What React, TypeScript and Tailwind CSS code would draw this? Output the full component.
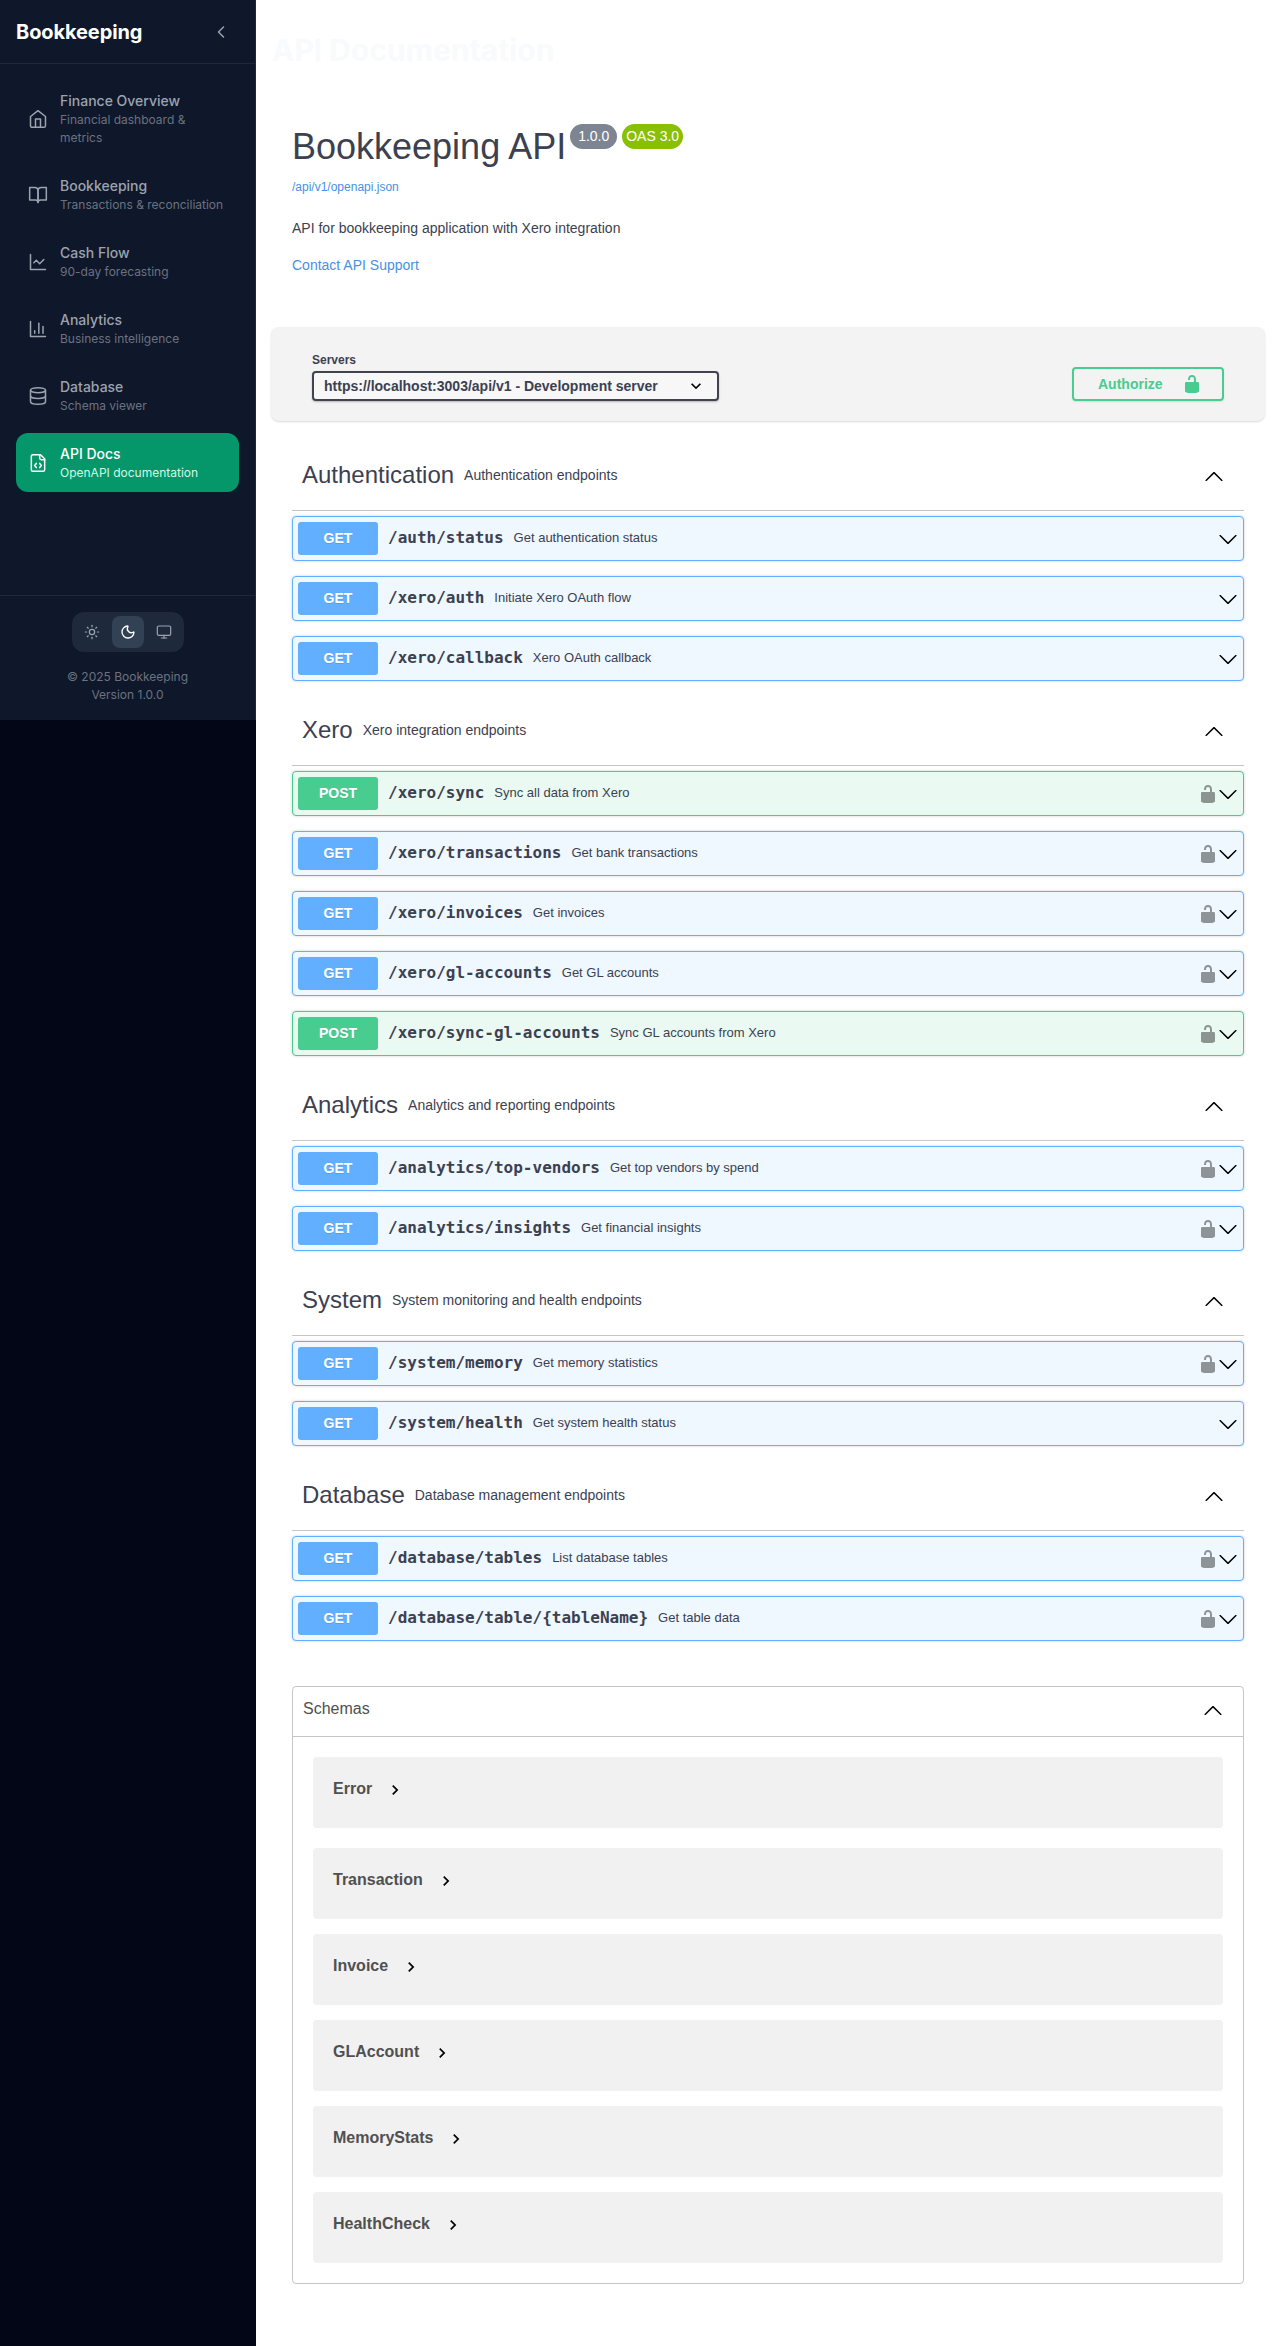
import React from 'react';
import { ChevronLeft, Database, Sun, Moon, Monitor } from 'lucide-react';

type Op = [method: 'GET' | 'POST', path: string, summary: string, locked: boolean];

const sections: { name: string; desc: string; ops: Op[] }[] = [
  {
    name: 'Authentication',
    desc: 'Authentication endpoints',
    ops: [
      ['GET', '/auth/status', 'Get authentication status', false],
      ['GET', '/xero/auth', 'Initiate Xero OAuth flow', false],
      ['GET', '/xero/callback', 'Xero OAuth callback', false],
    ],
  },
  {
    name: 'Xero',
    desc: 'Xero integration endpoints',
    ops: [
      ['POST', '/xero/sync', 'Sync all data from Xero', true],
      ['GET', '/xero/transactions', 'Get bank transactions', true],
      ['GET', '/xero/invoices', 'Get invoices', true],
      ['GET', '/xero/gl-accounts', 'Get GL accounts', true],
      ['POST', '/xero/sync-gl-accounts', 'Sync GL accounts from Xero', true],
    ],
  },
  {
    name: 'Analytics',
    desc: 'Analytics and reporting endpoints',
    ops: [
      ['GET', '/analytics/top-vendors', 'Get top vendors by spend', true],
      ['GET', '/analytics/insights', 'Get financial insights', true],
    ],
  },
  {
    name: 'System',
    desc: 'System monitoring and health endpoints',
    ops: [
      ['GET', '/system/memory', 'Get memory statistics', true],
      ['GET', '/system/health', 'Get system health status', false],
    ],
  },
  {
    name: 'Database',
    desc: 'Database management endpoints',
    ops: [
      ['GET', '/database/tables', 'List database tables', true],
      ['GET', '/database/table/{tableName}', 'Get table data', true],
    ],
  },
];

const schemas = ['Error', 'Transaction', 'Invoice', 'GLAccount', 'MemoryStats', 'HealthCheck'];

function Line({ children }: { children: React.ReactNode }) {
  return (
    <svg className="size-5" viewBox="0 0 24 24" fill="none" stroke="currentColor" strokeWidth="1.8" strokeLinecap="round" strokeLinejoin="round">
      {children}
    </svg>
  );
}

const navItems = [
  {
    label: 'Finance Overview',
    desc: 'Financial dashboard & metrics',
    icon: (
      <Line>
        <path d="m3 9 9-7 9 7v11a2 2 0 0 1-2 2H5a2 2 0 0 1-2-2z" />
        <path d="M9 22V12h6v10" />
      </Line>
    ),
  },
  { label: 'Bookkeeping', desc: 'Transactions & reconciliation', icon: <Line><path d="M2 3h6a4 4 0 0 1 4 4v14a3 3 0 0 0-3-3H2z" /><path d="M22 3h-6a4 4 0 0 0-4 4v14a3 3 0 0 1 3-3h7z" /></Line> },
  { label: 'Cash Flow', desc: '90-day forecasting', icon: <Line><path d="M3 3v18h18" /><path d="m19 9-5 5-4-4-3 3" /></Line> },
  { label: 'Analytics', desc: 'Business intelligence', icon: <Line><path d="M3 3v18h18" /><path d="M18 17V9" /><path d="M13 17V5" /><path d="M8 17v-3" /></Line> },
  { label: 'Database', desc: 'Schema viewer', icon: <Database className="size-5" strokeWidth={1.8} /> },
  {
    label: 'API Docs',
    desc: 'OpenAPI documentation',
    active: true,
    icon: (
      <Line>
        <path d="M15 2H6a2 2 0 0 0-2 2v16a2 2 0 0 0 2 2h12a2 2 0 0 0 2-2V7z" />
        <path d="M14 2v4a2 2 0 0 0 2 2h4" />
        <path d="M10 12.5 8 15l2 2.5" />
        <path d="m14 12.5 2 2.5-2 2.5" />
      </Line>
    ),
  },
];

function Arrow({ up = false }: { up?: boolean }) {
  return (
    <svg className="size-5 shrink-0" viewBox="0 0 20 20" fill="#000">
      {up ? (
        <path d="M 17.418 14.908 C 17.69 15.176 18.127 15.176 18.397 14.908 C 18.667 14.64 18.668 14.207 18.397 13.939 L 10.489 6.109 C 10.219 5.841 9.782 5.841 9.51 6.109 L 1.602 13.939 C 1.332 14.207 1.332 14.64 1.602 14.908 C 1.873 15.176 2.311 15.176 2.581 14.908 L 10 7.767 Z" />
      ) : (
        <path d="M17.418 6.109c.272-.268.709-.268.979 0s.271.701 0 .969l-7.908 7.830c-.27.268-.707.268-.979 0l-7.908-7.830c-.27-.268-.27-.701 0-.969.271-.268.709-.268.979 0L10 13.250z" />
      )}
    </svg>
  );
}

function Unlock({ className }: { className: string }) {
  return (
    <svg className={className} viewBox="0 0 20 20" fill="currentColor">
      <path d="M15.800 8H14V5.600C14 2.703 12.665 1 10 1 7.334 1 6 2.703 6 5.600V6h2v-.801C8 3.754 8.797 3 10 3c1.203 0 2 .754 2 2.199V8H4c-.553 0-1 .646-1 1.199V17c0 .549.428 1.139.951 1.307l1.197.387C5.672 18.861 6.550 19 7.100 19h5.800c.549 0 1.428-.139 1.951-.307l1.196-.387c.524-.167.953-.757.953-1.306V9.199C17 8.646 16.352 8 15.800 8z" />
    </svg>
  );
}

function Chevron({ className }: { className: string }) {
  return (
    <svg className={className} viewBox="0 0 24 24" fill="#000">
      <path d="M10 6L8.590 7.410 13.170 12l-4.580 4.590L10 18l6-6z" />
    </svg>
  );
}

function Operation({ op: [method, path, summary, locked] }: { op: Op }) {
  const post = method === 'POST';
  return (
    <div
      className={`flex h-[45px] items-center rounded-[4px] border p-[5px] shadow-[0_0_3px_rgba(0,0,0,0.19)] ${
        post ? 'border-[#49cc90] bg-[#ebf9f3]' : 'border-[#61affe] bg-[#eff7ff]'
      }`}
    >
      <span
        className={`flex h-[33px] w-20 shrink-0 items-center justify-center rounded-[3px] pb-px text-sm font-bold text-white [text-shadow:0_1px_0_rgba(0,0,0,0.1)] ${
          post ? 'bg-[#49cc90]' : 'bg-[#61affe]'
        }`}
      >
        {method}
      </span>
      <span className="ml-[10px] pb-[2px] font-['DejaVu_Sans_Mono',monospace] text-base font-bold leading-5">{path}</span>
      <span className="ml-[10px] flex-1 pb-[2px] text-[13px]">{summary}</span>
      {locked && <Unlock className="size-5 text-black opacity-40" />}
      <Arrow />
    </div>
  );
}

function Sidebar() {
  return (
    <aside className="flex h-[720px] w-64 shrink-0 flex-col border-r border-[#1e293b] bg-[#0f172a] font-['Inter',sans-serif]">
      <div className="flex h-16 shrink-0 items-center justify-between border-b border-[#1e293b] px-4">
        <span className="text-xl font-bold tracking-[-0.1px] text-white">Bookkeeping</span>
        <span className="flex size-9 items-center justify-center text-[#9ca3af]">
          <ChevronLeft className="size-5" strokeWidth={1.8} />
        </span>
      </div>
      <nav className="flex flex-1 flex-col gap-2 p-4">
        {navItems.map(({ label, desc, icon, active }) => (
          <a
            key={label}
            className={`flex items-center gap-3 rounded-xl px-3 py-[10px] ${active ? 'bg-[#059669] text-white' : 'text-[#9ca3af]'}`}
          >
            <span className="shrink-0">{icon}</span>
            <span className="flex flex-col">
              <span className="text-sm font-medium leading-[21px]">{label}</span>
              <span className={`text-xs leading-[18px] ${active ? 'text-[#d1fae5]' : 'text-[#6b7280]'}`}>{desc}</span>
            </span>
          </a>
        ))}
      </nav>
      <div className="flex flex-col items-center border-t border-[#1e293b] p-4">
        <div className="flex gap-1 rounded-xl bg-[#1e293b] p-1 text-[#9ca3af]">
          <span className="flex size-8 items-center justify-center rounded-lg"><Sun className="size-4" strokeWidth={1.8} /></span>
          <span className="flex size-8 items-center justify-center rounded-lg bg-[#334155] text-white"><Moon className="size-4" strokeWidth={2} /></span>
          <span className="flex size-8 items-center justify-center rounded-lg"><Monitor className="size-4" strokeWidth={1.8} /></span>
        </div>
        <div className="mt-4 text-center text-xs leading-[18px] text-[#6b7280]">
          <p>© 2025 Bookkeeping</p>
          <p>Version 1.0.0</p>
        </div>
      </div>
    </aside>
  );
}

export default function App() {
  return (
    <div className="flex h-[2346px] w-[1272px] items-start overflow-hidden bg-[#020617]">
      <Sidebar />
      <main className="h-full flex-1 bg-white pl-4 pr-2 font-['Liberation_Sans',Arial,sans-serif] text-[#3b4151]">
        <h1 className="pt-[28px] font-['Inter',sans-serif] text-[30px] font-bold leading-[45px] text-[#f9fafb]">API Documentation</h1>

        <header className="mt-[49px] h-[205px] px-5">
          <div className="flex items-start">
            <h2 className="mt-[4px] text-[36px] leading-[41px]">Bookkeeping API</h2>
            <span className="ml-[4px] mt-[2px] flex h-[25px] w-[47px] items-center justify-center rounded-full bg-[#7d8492] pb-[2px] text-sm text-white">1.0.0</span>
            <span className="ml-[5px] mt-[2px] flex h-[25px] w-[61px] items-center justify-center rounded-full bg-[#89bf04] pb-[2px] text-sm text-white">OAS 3.0</span>
          </div>
          <a className="mt-[12px] block text-xs leading-4 text-[#4990e2]">/api/v1/openapi.json</a>
          <p className="mt-[23px] text-sm leading-5">API for bookkeeping application with Xero integration</p>
          <a className="mt-[17px] block text-sm leading-5 text-[#4990e2]">Contact API Support</a>
        </header>

        <section className="-mx-px flex h-[94px] items-end justify-between rounded-lg bg-[#f3f3f3] pb-5 pl-[41px] pr-[41px] shadow-[0_1px_2px_rgba(0,0,0,0.15)]">
          <div>
            <p className="mb-[4px] text-xs font-bold leading-[14px]">Servers</p>
            <div className="flex h-[30px] w-[407px] items-center justify-between rounded-[4px] border-2 border-[#41444e] bg-[#f7f7f7] pl-[10px] pr-[11px] text-sm font-bold shadow-[0_1px_2px_rgba(0,0,0,0.25)]">
              <span>https://localhost:3003/api/v1 - Development server</span>
              <Chevron className="size-5 rotate-90" />
            </div>
          </div>
          <button className="flex h-[34px] w-[152px] items-center rounded-[4px] border-2 border-[#49cc90] pl-6 text-sm font-bold text-[#49cc90] shadow-[0_1px_2px_rgba(0,0,0,0.1)]">
            <span className="w-[84px] text-left">Authorize</span>
            <Unlock className="size-5" />
          </button>
        </section>

        <div className="px-5 pt-5">
          {sections.map(({ name, desc, ops }) => (
            <section key={name} className="pb-[15px]">
              <div className="mb-[5px] flex h-[70px] items-center border-b border-[#3b4151]/30 pl-[10px] pr-5">
                <h3 className="pb-[2px] text-2xl">{name}</h3>
                <span className="ml-[10px] flex-1 pb-px text-sm">{desc}</span>
                <Arrow up />
              </div>
              <div className="flex flex-col gap-[15px]">
                {ops.map((op) => <Operation key={op[1]} op={op} />)}
              </div>
            </section>
          ))}

          <section className="mt-[30px] h-[598px] rounded-[4px] border border-[#3b4151]/30 text-[#505050]">
            <div className="flex h-[50px] items-center justify-between border-b border-[#3b4151]/30 pb-[4px] pl-[10px] pr-5">
              <span className="pb-[2px] text-base">Schemas</span>
              <Arrow up />
            </div>
            <div className="flex flex-col gap-[15px] px-5 pt-5">
              {schemas.map((name, i) => (
                <div key={name} className={`flex h-[71px] items-start rounded-[4px] bg-[#f1f1f1] pl-5 pt-[23px] ${i === 0 ? 'mb-[5px]' : ''}`}>
                  <span className="text-base font-bold leading-[18px]">{name}</span>
                  <Chevron className="ml-[13px] size-5" />
                </div>
              ))}
            </div>
          </section>
        </div>
      </main>
    </div>
  );
}
